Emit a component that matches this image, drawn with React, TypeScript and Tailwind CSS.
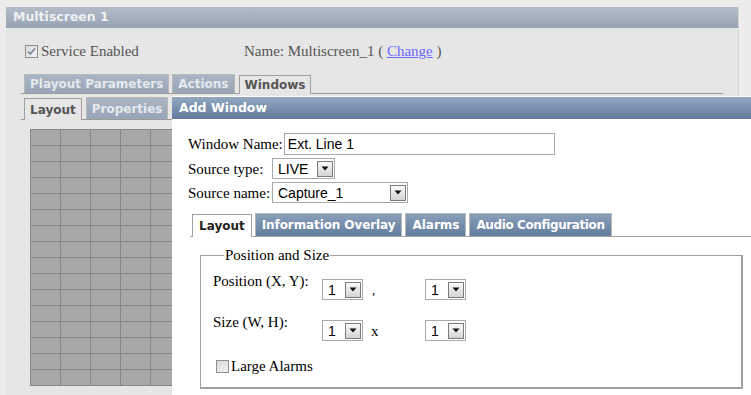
import React from "react"

type SelectProps = {
  value: string
  width: string
}

type TabProps = {
  label: string
  active?: boolean
  tone?: "gray" | "blue"
  className?: string
}

const serif = "font-['Liberation_Serif',serif]"
const verdana = "font-['DejaVu_Sans',Verdana,sans-serif] font-bold"

const Arrow = () => (
  <div className="flex h-[16px] w-[16px] items-center justify-center border border-[#7b7b7b] bg-gradient-to-b from-[#fafafa] to-[#d4d4d4]">
    <svg width="8" height="5" viewBox="0 0 8 5">
      <path d="M0.5 0.5h7L4 4.5z" fill="#111" />
    </svg>
  </div>
)

const Select = ({ value, width }: SelectProps) => (
  <div className={`flex h-[21px] items-center justify-between border border-[#a9a9a9] bg-white pl-[5px] pr-[1px] ${width}`}>
    <span className="font-['Liberation_Sans',Arial,sans-serif] text-[14px] leading-none text-black">{value}</span>
    <Arrow />
  </div>
)

const Tab = ({ label, active, tone = "gray", className = "" }: TabProps) => {
  const pad = tone === "gray" ? "px-[5px]" : "px-[6px]"
  if (active) {
    const bg = tone === "gray" ? "bg-[#e6e6e6] text-[#555]" : "bg-white text-[#222]"
    return (
      <div className={`-mb-px flex h-full items-center border border-b-0 border-[#a0a0a0] text-[12px] ${pad} ${verdana} ${bg} ${className}`}>
        {label}
      </div>
    )
  }
  const bg = tone === "gray"
    ? "bg-gradient-to-b from-[#aab5c4] to-[#98a5b6] text-[#e4e9f0]"
    : "bg-gradient-to-b from-[#8a9fba] to-[#637c9d] text-white"
  return (
    <div className={`flex h-full items-center border border-b-0 border-[#b8b8b8] text-[12px] ${pad} ${verdana} ${bg} ${className}`}>
      {label}
    </div>
  )
}

const Grid = () => (
  <div className="grid w-[160px] grid-cols-[repeat(5,30px)] grid-rows-[repeat(16,16px)] border-l border-t border-[#888]">
    {Array.from({ length: 80 }).map((_, i) => (
      <div key={i} className="border-b border-r border-[#888] bg-[#a8a8a8]" />
    ))}
  </div>
)

const Checkbox = ({ checked }: { checked?: boolean }) => (
  <div className="flex h-[13px] w-[13px] items-center justify-center border border-[#8e8e8e] bg-gradient-to-br from-[#d8d8d8] to-[#f4f4f4]">
    {checked && (
      <svg width="9" height="9" viewBox="0 0 9 9">
        <path d="M1 4.5l2.3 2.5L8 1.5" stroke="#7c8a99" strokeWidth="1.8" fill="none" />
      </svg>
    )}
  </div>
)

const Dialog = () => (
  <div className="absolute bottom-0 left-[172px] right-0 top-[96px] border-t border-white bg-white">
    <div className={`flex h-[22px] items-center bg-gradient-to-b from-[#93a7c1] to-[#637c9d] pl-[7px] text-[12.5px] text-white ${verdana}`}>
      Add Window
    </div>

    <div className={`pl-[16px] pt-[14px] text-[15px] leading-[20px] text-black ${serif}`}>
      <div className="flex items-center gap-[1px]">
        <span>Window Name:</span>
        <div className="flex h-[22px] w-[271px] items-center border border-[#a9a9a9] pl-[3px] font-['Liberation_Sans',Arial,sans-serif] text-[14px]">
          Ext. Line 1
        </div>
      </div>
      <div className="mt-[3px] flex items-center">
        <span className="w-[84px]">Source type:</span>
        <Select value="LIVE" width="w-[63px]" />
      </div>
      <div className="mt-[3px] flex items-center">
        <span className="w-[84px]">Source name:</span>
        <Select value="Capture_1" width="w-[136px]" />
      </div>
    </div>

    <div className="ml-[18px] mt-[10px] flex h-[24px] items-end gap-[3px] border-b border-[#a0a0a0] pl-[2px]">
      <Tab label="Layout" active tone="blue" />
      <Tab label="Information Overlay" tone="blue" className="tracking-[-0.1px]" />
      <Tab label="Alarms" tone="blue" />
      <Tab label="Audio Configuration" tone="blue" className="tracking-[-0.4px]" />
    </div>

    <fieldset className={`ml-[28px] mr-[8px] mt-[10px] h-[142px] border border-b-2 border-r-2 border-[#a0a0a0] pl-[12px] text-[15px] leading-[20px] text-black ${serif}`}>
      <legend className="ml-[11px] px-[1px] leading-[17px]">Position and Size</legend>
      <div className="mt-[7px] flex items-start">
        <span className="w-[109px]">Position (X, Y):</span>
        <div className="mt-[8px] flex items-center">
          <Select value="1" width="w-[41px]" />
          <span className="w-[62px] pl-[9px] text-[13px]">,</span>
          <Select value="1" width="w-[41px]" />
        </div>
      </div>
      <div className="mt-[12px] flex items-start">
        <span className="w-[109px]">Size (W, H):</span>
        <div className="mt-[8px] flex items-center">
          <Select value="1" width="w-[41px]" />
          <span className="w-[62px] pl-[8px]">x</span>
          <Select value="1" width="w-[41px]" />
        </div>
      </div>
      <div className="ml-[3px] mt-[15px] flex items-center gap-[2px]">
        <Checkbox />
        <span>Large Alarms</span>
      </div>
    </fieldset>
  </div>
)

const App = () => (
  <div className="relative h-[395px] w-[751px] overflow-hidden bg-[#ececec] pl-[6px] pt-[7px]">
    <div className="h-[400px] w-[733px] border-r border-[#d6d6d6] bg-[#e6e6e6]">
      <div className={`flex h-[21px] items-center bg-gradient-to-b from-[#b4bcc9] to-[#97a3b3] pl-[7px] text-[12.5px] text-[#eef1f5] ${verdana}`}>
        Multiscreen 1
      </div>

      <div className={`flex items-center pl-[19px] pt-[13px] text-[15px] leading-[20px] text-[#555] ${serif}`}>
        <div className="flex w-[219px] items-center gap-[3px]">
          <Checkbox checked />
          <span>Service Enabled</span>
        </div>
        <span>
          Name: Multiscreen_1 (&nbsp;<span className="text-[#6a6aff] underline">Change</span>&nbsp;)
        </span>
      </div>

      <div className="ml-[15px] mr-[15px] mt-[13px] flex h-[20px] items-end gap-[3px] border-b border-[#9a9a9a] pl-[3px]">
        <Tab label="Playout Parameters" />
        <Tab label="Actions" />
        <Tab label="Windows" active className="ml-[1px]" />
      </div>

      <div className="ml-[15px] mt-[3px] flex h-[23px] w-[200px] items-end gap-[4px] border-b border-[#9a9a9a] pl-[3px]">
        <Tab label="Layout" active />
        <Tab label="Properties" />
      </div>

      <div className="ml-[24px] mt-[9px]">
        <Grid />
      </div>
    </div>

    <Dialog />
  </div>
)

export default App
